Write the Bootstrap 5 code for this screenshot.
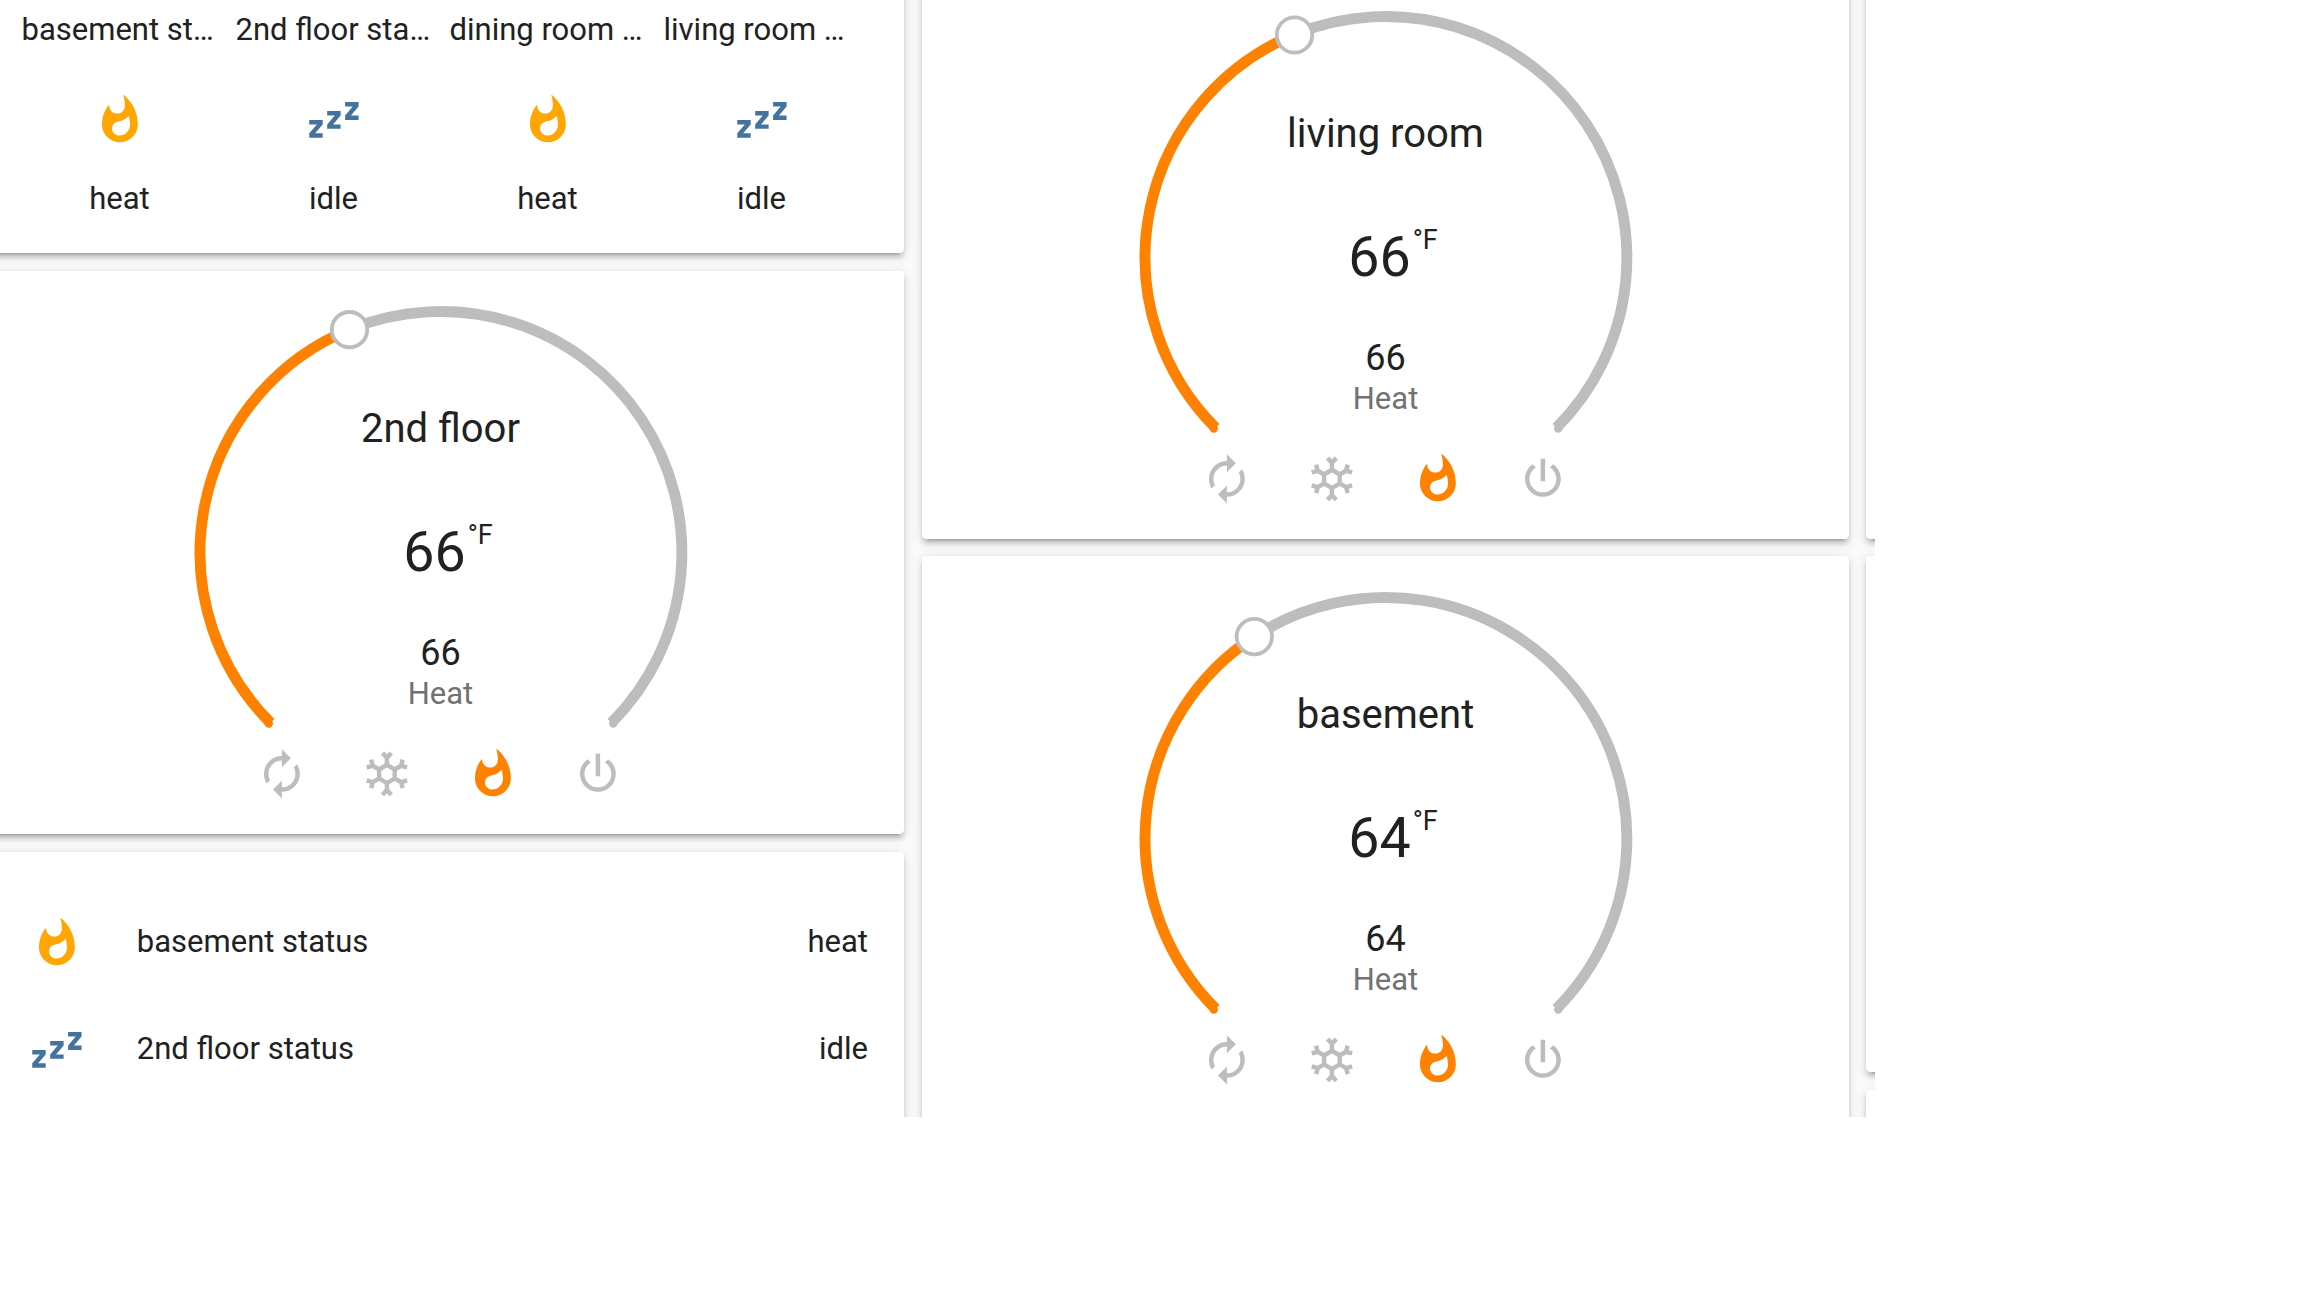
<!DOCTYPE html>
<html lang="en">
<head>
<meta charset="utf-8">
<title>Thermostats</title>
<link href="https://cdn.jsdelivr.net/npm/bootstrap@5.3.0/dist/css/bootstrap.min.css" rel="stylesheet">
<style>
  body { background: #fff; color: #212121; font-family: Roboto, "Liberation Sans", sans-serif; font-size: 31px; line-height: 36px; }
  .dash { width: 1875px; height: 1117px; background: #fafafa; }
  .board { margin-left: -23px; gap: 18px; }
  .lane { width: 927px; }
  .lane-edge { margin-left: -1px; }
  .panel { border: 0; border-radius: 4.5px; background: #fff; color: inherit;
    box-shadow: 0 4.5px 4.5px 0 rgba(0,0,0,.14), 0 2.25px 11.25px 0 rgba(0,0,0,.12), 0 6.75px 2.25px -4.5px rgba(0,0,0,.2); }
  .panel-glance { height: 273px; margin-top: -20px; padding: 32px 0 0 35.5px; }
  .glance-item { width: 214px; padding: 0 9px; }
  .glance-item .ico { margin: 45px 0 34px; }
  .ico { width: 53.8px; height: 53.8px; fill: currentColor; display: block; flex: none; }
  .c-heat { color: #ffa600; }
  .c-idle { color: #44739e; }
  .panel-gauge { height: 563px; margin-top: 18px; }
  .panel-gauge.first { height: 564px; margin-top: -25px; padding-top: .5px; }
  .panel-gauge.tall { height: 620px; margin-top: 17px; padding-top: 1px; }
  .dial { display: grid; justify-items: center; height: 476px; }
  .dial > * { grid-area: 1 / 1; }
  .ring { width: 500px; height: 476px; fill: none; stroke-width: 10.9; }
  .readout { padding-top: 134px; }
  .room { font-size: 40px; line-height: 48px; }
  .current { font-size: 55.5px; line-height: 64px; margin-top: 68px; padding-left: 15px; }
  .unit { font-size: 27px; line-height: 30px; margin: -1px 0 0 2px; }
  .target { font-size: 36px; line-height: 40px; margin-top: 48px; }
  .mode { font-size: 31px; line-height: 36px; margin-top: 3px; color: #727272; }
  .modes { gap: 51.5px; color: #bdbdbd; padding-right: 1px; }
  .on { color: #ff8100; }
  .panel-list { height: 300px; margin-top: 18px; padding: 37px 36px 0 53px; }
  .status-row { height: 107px; }
  .status-row span { padding-bottom: 2px; }
  .status-row .name { margin-left: 53px; }
</style>
</head>
<body>
<svg class="d-none" xmlns="http://www.w3.org/2000/svg">
  <symbol id="fire" viewBox="0 0 24 24"><path d="M11.71,19C9.93,19 8.5,17.59 8.5,15.86C8.5,14.24 9.53,13.1 11.3,12.74C13.07,12.38 14.9,11.53 15.92,10.16C16.31,11.45 16.5,12.81 16.5,14.2C16.5,16.84 14.36,19 11.71,19M13.5,0.67C13.5,0.67 14.24,3.32 14.24,5.47C14.24,7.53 12.89,9.2 10.83,9.2C8.76,9.2 7.2,7.53 7.2,5.47L7.23,5.1C5.21,7.5 4,10.61 4,14A8,8 0 0,0 12,22A8,8 0 0,0 20,14C20,8.6 17.41,3.8 13.5,0.67Z"/></symbol>
  <symbol id="sleep" viewBox="0 0 24 24"><path d="M23,12H17V10L20.39,6H17V4H23V6L19.62,10H23V12M15,16H9V14L12.39,10H9V8H15V10L11.62,14H15V16M7,20H1V18L4.39,14H1V12H7V14L3.62,18H7V20Z"/></symbol>
  <symbol id="auto" viewBox="0 0 24 24"><path d="M12,6V9L16,5L12,1V4A8,8 0 0,0 4,12C4,13.57 4.46,15.03 5.24,16.26L6.7,14.8C6.25,13.97 6,13 6,12A6,6 0 0,1 12,6M18.76,7.74L17.3,9.2C17.74,10.04 18,11 18,12A6,6 0 0,1 12,18V15L8,19L12,23V20A8,8 0 0,0 20,12C20,10.43 19.54,8.97 18.76,7.74Z"/></symbol>
  <symbol id="snow" viewBox="0 0 24 24"><path d="M20.79,13.95L18.46,14.57L16.46,13.44V10.56L18.46,9.43L20.79,10.05L21.31,8.12L19.54,7.65L20,5.88L18.07,5.36L17.45,7.69L15.45,8.82L13,7.38V5.12L14.71,3.41L13.29,2L12,3.29L10.71,2L9.29,3.41L11,5.12V7.38L8.5,8.82L6.5,7.69L5.92,5.36L4,5.88L4.47,7.65L2.7,8.12L3.22,10.05L5.55,9.43L7.55,10.56V13.45L5.55,14.58L3.22,13.96L2.7,15.89L4.47,16.36L4,18.12L5.93,18.64L6.55,16.31L8.55,15.18L11,16.62V18.88L9.29,20.59L10.71,22L12,20.71L13.29,22L14.7,20.59L13,18.88V16.62L15.5,15.17L17.5,16.3L18.12,18.63L20,18.12L19.53,16.35L21.3,15.88L20.79,13.95M9.5,10.56L12,9.11L14.5,10.56V13.44L12,14.89L9.5,13.44V10.56Z"/></symbol>
  <symbol id="power" viewBox="0 0 24 24"><path d="M16.56,5.44L15.11,6.89C16.84,7.94 18,9.83 18,12A6,6 0 0,1 12,18A6,6 0 0,1 6,12C6,9.83 7.16,7.94 8.88,6.88L7.44,5.44C5.36,6.88 4,9.28 4,12A8,8 0 0,0 12,20A8,8 0 0,0 20,12C20,9.28 18.64,6.88 16.56,5.44M13,3H11V13H13"/></symbol>
</svg>

<main class="dash overflow-hidden">
  <div class="board d-flex">

    <section class="lane flex-shrink-0 d-flex flex-column">
      <div class="card panel panel-glance flex-shrink-0">
        <div class="d-flex">
          <div class="glance-item d-flex flex-column align-items-center">
            <div class="text-nowrap w-100">basement st…</div>
            <svg class="ico c-heat"><use href="#fire"/></svg>
            <div>heat</div>
          </div>
          <div class="glance-item d-flex flex-column align-items-center">
            <div class="text-nowrap w-100">2nd floor sta…</div>
            <svg class="ico c-idle"><use href="#sleep"/></svg>
            <div>idle</div>
          </div>
          <div class="glance-item d-flex flex-column align-items-center">
            <div class="text-nowrap w-100">dining room …</div>
            <svg class="ico c-heat"><use href="#fire"/></svg>
            <div>heat</div>
          </div>
          <div class="glance-item d-flex flex-column align-items-center">
            <div class="text-nowrap w-100">living room …</div>
            <svg class="ico c-idle"><use href="#sleep"/></svg>
            <div>idle</div>
          </div>
        </div>
      </div>

      <div class="card panel panel-gauge flex-shrink-0">
        <div class="dial">
          <svg class="ring" viewBox="-250 -281.4 500 476">
            <path stroke="#bdbdbd" d="M-91.5-222.9A241 241 0 0 1 170.4 170.4"/>
            <path stroke="#ff8100" d="M-170.4 170.4A241 241 0 0 1-91.5-222.9"/>
            <circle cx="-172.2" cy="171.2" r="4.2" fill="#ff8100" stroke="none"/><circle cx="172.2" cy="171.2" r="4.2" fill="#bdbdbd" stroke="none"/>
            <circle cx="-91.5" cy="-222.7" r="17.7" fill="#fff" stroke="#bdbdbd" stroke-width="3.8"/>
          </svg>
          <div class="readout d-flex flex-column align-items-center">
            <div class="room">2nd floor</div>
            <div class="current d-flex align-items-start"><span>66</span><span class="unit">°F</span></div>
            <div class="target">66</div>
            <div class="mode">Heat</div>
          </div>
        </div>
        <div class="modes d-flex justify-content-center">
          <svg class="ico"><use href="#auto"/></svg>
          <svg class="ico"><use href="#snow"/></svg>
          <svg class="ico on"><use href="#fire"/></svg>
          <svg class="ico"><use href="#power"/></svg>
        </div>
      </div>

      <div class="card panel panel-list flex-shrink-0">
        <div class="status-row d-flex align-items-center">
          <svg class="ico c-heat"><use href="#fire"/></svg>
          <span class="name">basement status</span><span class="ms-auto">heat</span>
        </div>
        <div class="status-row d-flex align-items-center">
          <svg class="ico c-idle"><use href="#sleep"/></svg>
          <span class="name">2nd floor status</span><span class="ms-auto">idle</span>
        </div>
      </div>
    </section>

    <section class="lane flex-shrink-0 d-flex flex-column">
      <div class="card panel panel-gauge first flex-shrink-0">
        <div class="dial">
          <svg class="ring" viewBox="-250 -281.4 500 476">
            <path stroke="#bdbdbd" d="M-91.5-222.9A241 241 0 0 1 170.4 170.4"/>
            <path stroke="#ff8100" d="M-170.4 170.4A241 241 0 0 1-91.5-222.9"/>
            <circle cx="-172.2" cy="171.2" r="4.2" fill="#ff8100" stroke="none"/><circle cx="172.2" cy="171.2" r="4.2" fill="#bdbdbd" stroke="none"/>
            <circle cx="-91.5" cy="-222.4" r="17.7" fill="#fff" stroke="#bdbdbd" stroke-width="3.8"/>
          </svg>
          <div class="readout d-flex flex-column align-items-center">
            <div class="room">living room</div>
            <div class="current d-flex align-items-start"><span>66</span><span class="unit">°F</span></div>
            <div class="target">66</div>
            <div class="mode">Heat</div>
          </div>
        </div>
        <div class="modes d-flex justify-content-center">
          <svg class="ico"><use href="#auto"/></svg>
          <svg class="ico"><use href="#snow"/></svg>
          <svg class="ico on"><use href="#fire"/></svg>
          <svg class="ico"><use href="#power"/></svg>
        </div>
      </div>

      <div class="card panel panel-gauge tall flex-shrink-0">
        <div class="dial">
          <svg class="ring" viewBox="-250 -281.4 500 476">
            <path stroke="#bdbdbd" d="M-131.7-201.8A241 241 0 0 1 170.4 170.4"/>
            <path stroke="#ff8100" d="M-170.4 170.4A241 241 0 0 1-131.7-201.8"/>
            <circle cx="-172.2" cy="171.2" r="4.2" fill="#ff8100" stroke="none"/><circle cx="172.2" cy="171.2" r="4.2" fill="#bdbdbd" stroke="none"/>
            <circle cx="-131.7" cy="-201.8" r="17.7" fill="#fff" stroke="#bdbdbd" stroke-width="3.8"/>
          </svg>
          <div class="readout d-flex flex-column align-items-center">
            <div class="room">basement</div>
            <div class="current d-flex align-items-start"><span>64</span><span class="unit">°F</span></div>
            <div class="target">64</div>
            <div class="mode">Heat</div>
          </div>
        </div>
        <div class="modes d-flex justify-content-center">
          <svg class="ico"><use href="#auto"/></svg>
          <svg class="ico"><use href="#snow"/></svg>
          <svg class="ico on"><use href="#fire"/></svg>
          <svg class="ico"><use href="#power"/></svg>
        </div>
      </div>
    </section>

    <section class="lane lane-edge flex-shrink-0 d-flex flex-column">
      <div class="card panel panel-gauge first flex-shrink-0"></div>
      <div class="card panel flex-shrink-0" style="height:516px;margin-top:17px"></div>
      <div class="card panel flex-shrink-0" style="height:200px;margin-top:18px"></div>
    </section>

  </div>
</main>
<script src="https://cdn.jsdelivr.net/npm/bootstrap@5.3.0/dist/js/bootstrap.bundle.min.js"></script>
</body>
</html>
